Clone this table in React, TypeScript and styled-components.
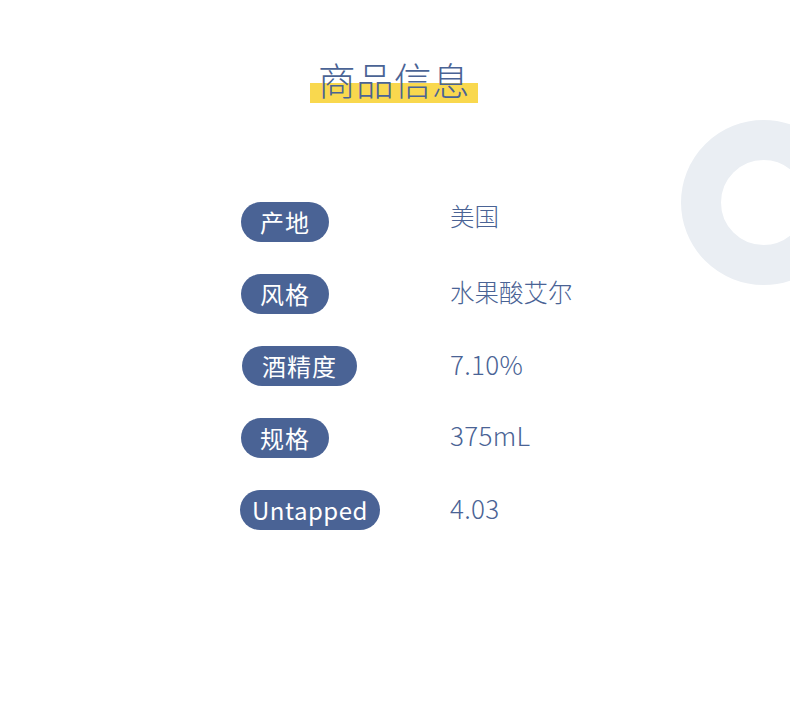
import React from "react";
import styled, { createGlobalStyle } from "styled-components";

const Global = createGlobalStyle`
  html, body { margin: 0; padding: 0; background: #ffffff; }
  body { font-family: "Noto Sans CJK SC", "Noto Sans", sans-serif; }
`;

const Page = styled.div`
  position: relative;
  width: 790px;
  height: 713px;
  overflow: hidden;
  background: #ffffff;
`;

const Ring = styled.div`
  position: absolute;
  left: 681px;
  top: 120px;
  width: 85px;
  height: 85px;
  border-radius: 50%;
  border: 40px solid #eaeef3;
`;

const Header = styled.div`
  display: flex;
  justify-content: center;
  padding-top: 55px;
  padding-right: 2px;
`;

const TitleWrap = styled.div`
  position: relative;
  width: 168px;
  height: 48px;
  display: flex;
  justify-content: center;
`;

const Highlight = styled.div`
  position: absolute;
  left: 0;
  bottom: 0;
  width: 168px;
  height: 20px;
  background: #f9d84e;
`;

const Title = styled.h1`
  position: relative;
  margin: 0;
  font-size: 37.5px;
  font-weight: 300;
  line-height: 48px;
  color: #4a6395;
  letter-spacing: 0.5px;
`;

const Table = styled.div`
  display: grid;
  grid-template-columns: 210px auto;
  grid-auto-rows: 72px;
  margin-left: 240px;
  margin-top: 99px;
`;

const Label = styled.div<{ $shift?: number }>`
  display: flex;
  align-items: flex-start;
  padding-left: ${(p) => p.$shift ?? 1}px;
`;

const Pill = styled.span<{ $pad: number; $spacing: number }>`
  display: inline-flex;
  align-items: center;
  justify-content: center;
  height: 40px;
  padding: 0 ${(p) => p.$pad}px;
  border-radius: 20px;
  background: #4a6395;
  color: #ffffff;
  font-size: 24px;
  font-weight: 400;
  line-height: 1;
  letter-spacing: ${(p) => p.$spacing}px;
  white-space: nowrap;
`;

const Value = styled.div<{ $latin?: boolean; $lift?: number }>`
  display: flex;
  align-items: flex-start;
  height: 40px;
  margin-top: ${(p) => -(p.$lift ?? 0)}px;
  line-height: 36px;
  font-size: ${(p) => (p.$latin ? 26 : 24.5)}px;
  font-weight: 300;
  letter-spacing: ${(p) => (p.$latin ? 0.3 : 0)}px;
  color: #4a6395;
  white-space: nowrap;
`;

const rows: {
  label: string;
  value: string;
  shift?: number;
  pad: number;
  spacing: number;
  latin?: boolean;
  lift?: number;
}[] = [
  { label: "产地", value: "美国", pad: 19, spacing: 1, lift: 4 },
  { label: "风格", value: "水果酸艾尔", pad: 19, spacing: 1 },
  { label: "酒精度", value: "7.10%", shift: 2, pad: 20, spacing: 1, latin: true },
  { label: "规格", value: "375mL", pad: 19, spacing: 1, latin: true, lift: 1 },
  { label: "Untapped", value: "4.03", shift: 0, pad: 12, spacing: 0.5, latin: true },
];

export default function App() {
  return (
    <Page>
      <Global />
      <Ring />
      <Header>
        <TitleWrap>
          <Highlight />
          <Title>商品信息</Title>
        </TitleWrap>
      </Header>
      <Table>
        {rows.map((r) => (
          <React.Fragment key={r.label}>
            <Label $shift={r.shift}>
              <Pill $pad={r.pad} $spacing={r.spacing}>
                {r.label}
              </Pill>
            </Label>
            <Value $latin={r.latin} $lift={r.lift}>
              {r.value}
            </Value>
          </React.Fragment>
        ))}
      </Table>
    </Page>
  );
}
